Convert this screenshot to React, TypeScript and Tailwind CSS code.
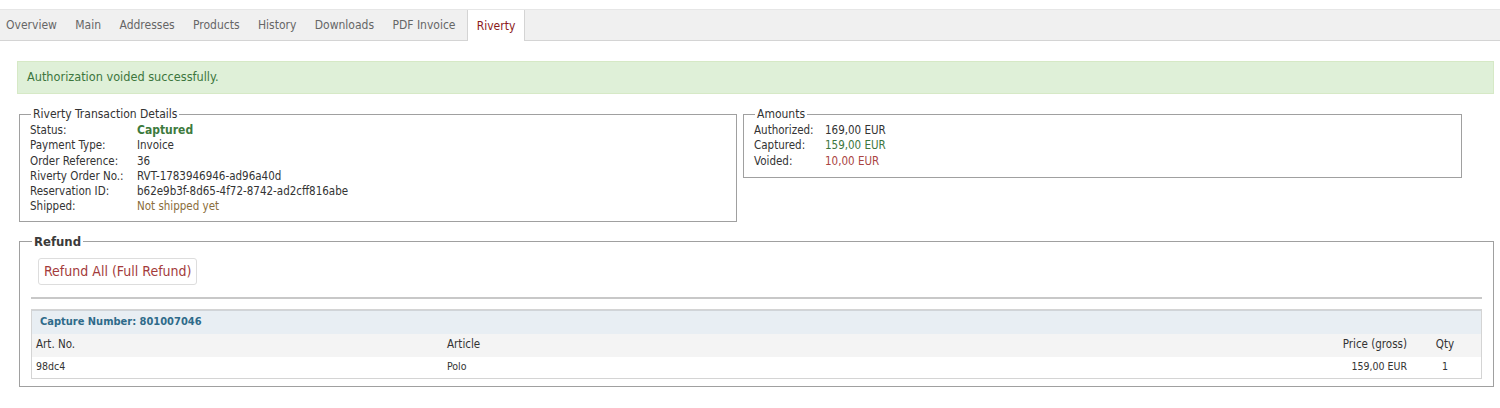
const tabs = ["Overview", "Main", "Addresses", "Products", "History", "Downloads", "PDF Invoice"];

const details = [
  { label: "Status:", value: "Captured", cls: "font-bold text-[#3d7a3d] text-[12px]" },
  { label: "Payment Type:", value: "Invoice", cls: "text-[#333]" },
  { label: "Order Reference:", value: "36", cls: "text-[#333]" },
  { label: "Riverty Order No.:", value: "RVT-1783946946-ad96a40d", cls: "text-[#333]" },
  { label: "Reservation ID:", value: "b62e9b3f-8d65-4f72-8742-ad2cff816abe", cls: "text-[#333]" },
  { label: "Shipped:", value: "Not shipped yet", cls: "text-[#8a6d3b]" },
];

const amounts = [
  { label: "Authorized:", value: "169,00 EUR", cls: "text-[#333]" },
  { label: "Captured:", value: "159,00 EUR", cls: "text-[#3c763d]" },
  { label: "Voided:", value: "10,00 EUR", cls: "text-[#a94442]" },
];

export default function App() {
  return (
    <div
      className="w-[1500px] h-[408px] bg-white text-[#333] text-[11.5px]"
      style={{ fontFamily: "'DejaVu Sans Condensed', 'DejaVu Sans', sans-serif" }}
    >
      {/* Tabs */}
      <div className="pt-[9px]">
        <div className="flex h-[32px] bg-[#f0f0f0] border-b border-[#d4d4d4] border-t border-t-[#e6e6e6]">
          {tabs.map((t) => (
            <div key={t} className="px-[6.1px] mx-[3.1px] first:ml-0 flex items-center text-[12px] text-[#666]">
              {t}
            </div>
          ))}
          <div className="ml-[2px] px-[9px] flex items-center text-[12px] text-[#8b1a1a] bg-white border-x border-[#d4d4d4] -mb-px">
            Riverty
          </div>
        </div>
      </div>

      <div className="pl-[17px] pr-[5px]">
        {/* Success */}
        <div className="mt-[20px] mr-[1px] h-[33px] bg-[#dff0d8] border border-[#d6e9c6] flex items-center pl-[9px] text-[12.6px] text-[#3c763d]">
          Authorization voided successfully.
        </div>

        {/* Detail fieldsets */}
        <div className="mt-[11px] flex items-start pl-[2px] gap-[6px]">
          <fieldset className="w-[718px] h-[117px] border border-[#a0a0a0] pl-[10px] pr-2 pb-2">
            <legend className="px-[2px] ml-[1px] text-[12px] text-[#333]">Riverty Transaction Details</legend>
            <div className="grid grid-cols-[107px_1fr] leading-[15.3px]">
              {details.map((d) => (
                <div key={d.label} className="contents">
                  <div>{d.label}</div>
                  <div className={d.cls}>{d.value}</div>
                </div>
              ))}
            </div>
          </fieldset>
          <fieldset className="w-[719px] h-[73px] border border-[#a0a0a0] pl-[10px] pr-2 pb-2">
            <legend className="px-[2px] ml-[1px] text-[12px] text-[#333]">Amounts</legend>
            <div className="grid grid-cols-[71px_1fr] leading-[15.3px]">
              {amounts.map((d) => (
                <div key={d.label} className="contents">
                  <div>{d.label}</div>
                  <div className={d.cls}>{d.value}</div>
                </div>
              ))}
            </div>
          </fieldset>
        </div>

        {/* Refund */}
        <fieldset className="mt-[10px] ml-[2px] w-[1475px] h-[155px] border border-[#a0a0a0] px-[11px]">
          <legend className="px-[2px] ml-[1px] text-[13px] font-bold text-[#3a3a3a]">Refund</legend>
          <div className="pt-[6px] pl-[7px]">
            <button className="h-[27px] px-[5px] border border-[#ddd] rounded-[3px] bg-white text-[14px] text-[#a33b3b]">
              Refund All (Full Refund)
            </button>
          </div>
          <div className="mt-[12px] h-[2px] bg-[#c8c8c8]" />
          <div className="mt-[10px] border border-[#d4d4d4]">
            <div className="h-[24px] bg-[#e8eef3] border-t border-t-[#d0d4d8] flex items-center pl-[8px] font-bold text-[11px] text-[#2e6b8a]">
              Capture Number: 801007046
            </div>
            <div className="h-[23px] bg-[#f4f4f4] grid grid-cols-[411px_1fr_130px_72px] items-center pl-[4px] text-[11.5px] text-[#333]">
              <div>Art. No.</div>
              <div>Article</div>
              <div className="text-right pr-[2px]">Price (gross)</div>
              <div className="text-center">Qty</div>
            </div>
            <div className="h-[21px] bg-white grid grid-cols-[411px_1fr_130px_72px] items-center pl-[4px] text-[10.5px] text-[#333]">
              <div>98dc4</div>
              <div>Polo</div>
              <div className="text-right pr-[2px]">159,00 EUR</div>
              <div className="text-center">1</div>
            </div>
          </div>
        </fieldset>
      </div>
    </div>
  );
}
